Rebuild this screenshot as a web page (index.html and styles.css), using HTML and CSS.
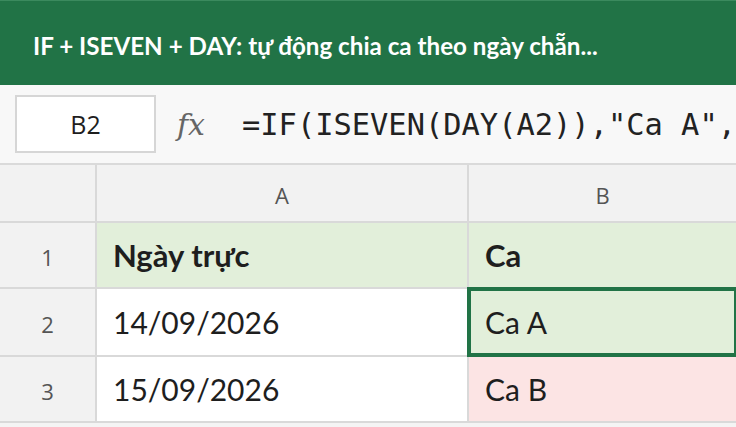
FILE: index.html
```html
<!DOCTYPE html>
<html lang="vi">
<head>
  <meta charset="UTF-8" />
  <title>IF + ISEVEN + DAY</title>
  <link rel="stylesheet" href="styles.css">
</head>
<body>
  <div class="titlebar">IF + ISEVEN + DAY: tự động chia ca theo ngày chẵn...</div>

  <div class="formulabar">
    <div class="namebox">B2</div>
    <div class="fx">fx</div>
    <div class="formula">=IF(ISEVEN(DAY(A2)),"Ca A","Ca B")</div>
  </div>

  <div class="sheet">
    <div class="hd corner"></div>
    <div class="hd">A</div>
    <div class="hd">B</div>

    <div class="hd rownum">1</div>
    <div class="cell head">Ngày trực</div>
    <div class="cell head">Ca</div>

    <div class="hd rownum">2</div>
    <div class="cell">14/09/2026</div>
    <div class="cell even active">Ca A</div>

    <div class="hd rownum">3</div>
    <div class="cell">15/09/2026</div>
    <div class="cell odd">Ca B</div>
  </div>
</body>
</html>
```

FILE: styles.css
```css
body {
  margin: 0;
  width: 736px;
  height: 427px;
  overflow: hidden;
  background: #f4f4f4;
  font-family: "Lato", "Open Sans", sans-serif;
  color: #222;
}
.titlebar {
  height: 85px;
  box-sizing: border-box;
  padding: 5px 0 0 33px;
  display: flex;
  align-items: center;
  background: #217346;
  border-top: 1px solid #3b8a5e;
  color: #fff;
  font-size: 24.2px;
  font-weight: 700;
  white-space: nowrap;
}
.formulabar {
  height: 80px;
  box-sizing: border-box;
  display: flex;
  align-items: center;
  background: #f8f8f8;
  border-bottom: 2px solid #dadada;
  padding-left: 15px;
  white-space: nowrap;
  overflow: hidden;
}
.namebox {
  flex: none;
  width: 141px;
  height: 58px;
  box-sizing: border-box;
  border: 2px solid #d6d6d6;
  background: #fff;
  display: flex;
  align-items: center;
  justify-content: center;
  font-family: "Open Sans", sans-serif;
  font-size: 25px;
  color: #1e1e1e;
}
.fx {
  flex: none;
  width: 86px;
  padding-left: 21px;
  box-sizing: border-box;
  font-family: "DejaVu Serif", "Liberation Serif", serif;
  font-style: italic;
  font-size: 30px;
  color: #666;
}
.formula {
  flex: none;
  font-family: "DejaVu Sans Mono", monospace;
  font-size: 30.4px;
  color: #222;
}
.sheet {
  display: grid;
  grid-template-columns: 95px 370px 1fr;
  grid-template-rows: 56px 64px 66px 64px;
  gap: 2px;
  padding-bottom: 2px;
  background: #d9d9d9;
}
.hd {
  background: #f2f2f2;
  color: #555;
  font-family: "Open Sans", sans-serif;
  font-size: 22px;
  padding-top: 3px;
  display: flex;
  align-items: center;
  justify-content: center;
}
.cell {
  background: #fff;
  display: flex;
  align-items: center;
  padding-left: 16px;
  font-size: 30px;
  color: #1e1e1e;
}
.cell.head {
  background: #e2efda;
  font-size: 31px;
  font-weight: 700;
}
.cell.even {
  background: #e2efda;
}
.cell.odd {
  background: #fce4e4;
}
.cell.active {
  outline: 4px solid #217346;
  outline-offset: -2px;
}
```
